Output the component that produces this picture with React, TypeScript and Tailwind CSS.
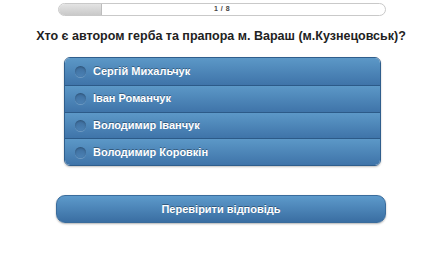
import React from "react";

const options = ["Сергій Михальчук", "Іван Романчук", "Володимир Іванчук", "Володимир Коровкін"];

export default function App() {
  return (
    <div className="w-[441px] h-[264px] bg-white flex flex-col items-center" style={{ fontFamily: '"Liberation Sans", Arial, sans-serif' }}>
      <div className="mt-[3px] ml-[3px] w-[328px] h-[13px] rounded-full border border-[#c9c9c9] bg-white flex overflow-hidden relative">
        <div className="w-[43px] h-full bg-gradient-to-b from-[#e4e4e4] to-[#c9c9c9] border-r border-[#bdbdbd]"></div>
        <div className="absolute inset-0 flex items-center justify-center text-[7px] font-bold text-[#444] tracking-[0.5px]">1 / 8</div>
      </div>
      <div className="mt-[12px] ml-[1px] text-[12.5px] font-bold text-[#222] leading-[16px]">
        Хто є автором герба та прапора м. Вараш (м.Кузнецовськ)?
      </div>
      <div className="mt-[13px] ml-[4px] w-[317px] rounded-[6px] border border-[#2f5e8c] overflow-hidden flex flex-col shadow-[0_1px_2px_rgba(0,0,0,0.25)]">
        {options.map((o, i) => (
          <div
            key={i}
            className={`h-[26.75px] flex items-center bg-gradient-to-b from-[#5c98c7] to-[#3f74a9] ${i > 0 ? "border-t border-[#2c5a88]" : ""}`}
          >
            <div className="ml-[10px] w-[11px] h-[11px] rounded-full bg-gradient-to-b from-[#3d6d9d] to-[#4c82b5] shadow-[inset_0_1px_2px_rgba(0,0,0,0.25),0_1px_0_rgba(255,255,255,0.2)]"></div>
            <div className="ml-[7px] text-[11px] font-bold text-white [text-shadow:0_-1px_0_rgba(0,0,0,0.35)]">{o}</div>
          </div>
        ))}
      </div>
      <div className="mt-[29px] ml-[1px] w-[330px] h-[28px] rounded-[9px] border border-[#3a6c9c] bg-gradient-to-b from-[#5d9acb] to-[#3a6ea2] flex items-center justify-center shadow-[0_1px_2px_rgba(0,0,0,0.3)]">
        <span className="text-[11px] font-bold text-white [text-shadow:0_-1px_0_rgba(0,0,0,0.35)]">Перевірити відповідь</span>
      </div>
    </div>
  );
}
